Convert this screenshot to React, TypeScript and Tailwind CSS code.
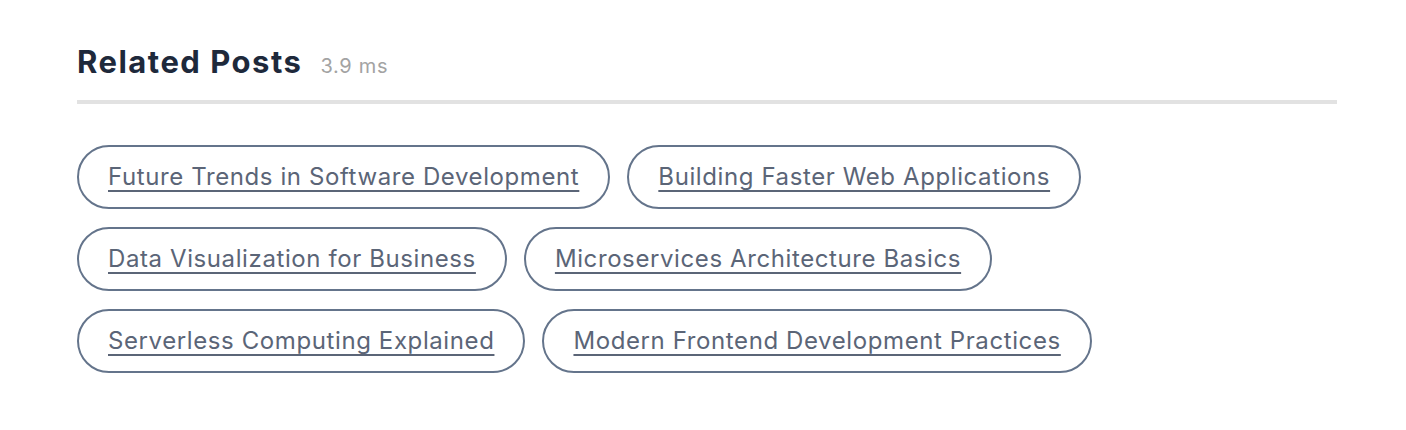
const posts = [
  "Future Trends in Software Development",
  "Building Faster Web Applications",
  "Data Visualization for Business",
  "Microservices Architecture Basics",
  "Serverless Computing Explained",
  "Modern Frontend Development Practices",
];

export default function App() {
  return (
    <div className="min-h-screen bg-white px-[77px] pt-[40px] font-['Inter',sans-serif]">
      <div className="w-[1260px]">
        {/* Header */}
        <div className="flex items-baseline gap-[18px] pb-[16px] border-b-[4px] border-[#e2e2e2]">
          <h2 className="text-[31px] font-bold tracking-[1.5px] text-[#1e293b] leading-[44px]">Related Posts</h2>
          <span className="text-[20px] tracking-[0.7px] text-[#a3a3a3]">3.9 ms</span>
        </div>

        {/* Pills */}
        <div className="mt-[41px] flex flex-wrap gap-x-[17px] gap-y-[18px]">
          {posts.map((p) => (
            <a
              key={p}
              href="#"
              className="flex items-center h-[64px] px-[29px] rounded-full border-2 border-[#64748b] text-[24px] tracking-[0.6px] text-[#5b6577] underline underline-offset-[5px] decoration-[1.5px]"
            >
              {p}
            </a>
          ))}
        </div>
      </div>
    </div>
  );
}
